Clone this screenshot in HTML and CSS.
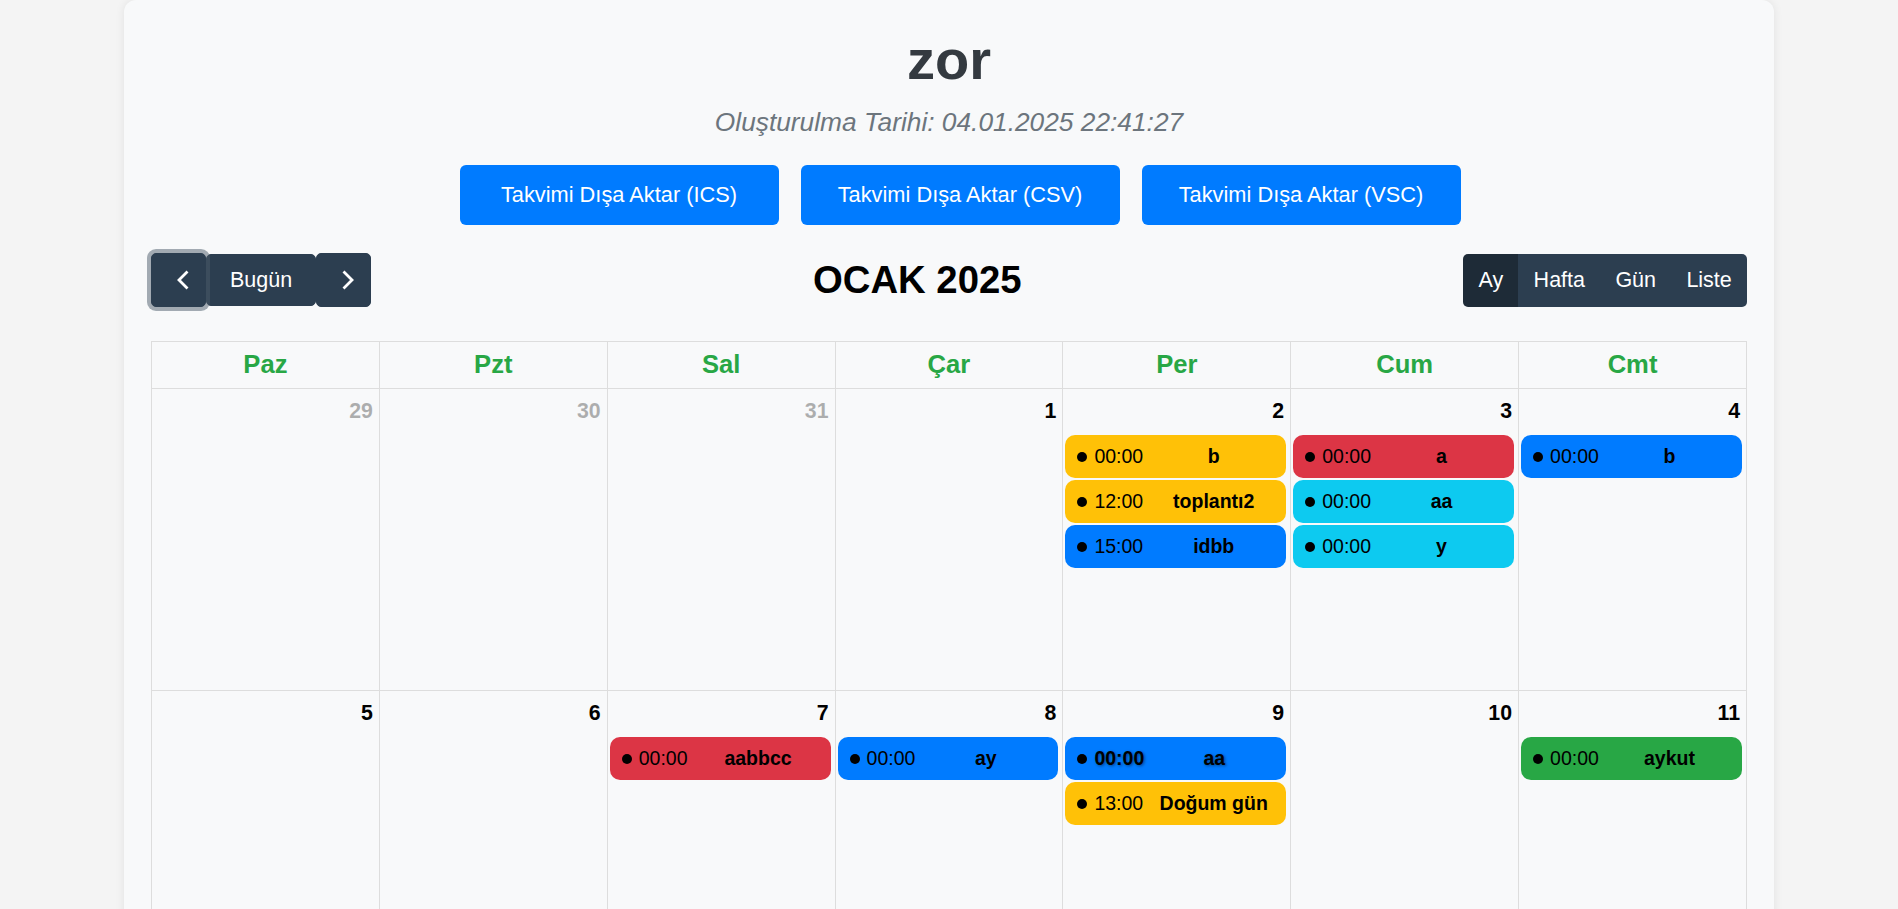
FILE: index.html
```html
<!DOCTYPE html>
<html lang="tr">
<head>
<meta charset="utf-8">
<title>zor</title>
<link rel="stylesheet" href="styles.css">
</head>
<body>
<div class="card">
  <h1 class="title">zor</h1>
  <p class="created">Oluşturulma Tarihi: 04.01.2025 22:41:27</p>
  <div class="exports">
    <button class="export-btn">Takvimi Dışa Aktar (ICS)</button>
    <button class="export-btn">Takvimi Dışa Aktar (CSV)</button>
    <button class="export-btn">Takvimi Dışa Aktar (VSC)</button>
  </div>

  <div class="toolbar">
    <div class="nav-group">
      <button class="nbtn arrow focus" aria-label="önceki">
        <svg width="12" height="20" viewBox="0 0 12 20"><polyline points="10.5,1.5 2,10 10.5,18.5" fill="none" stroke="#fff" stroke-width="2.8"/></svg>
      </button>
      <button class="nbtn today">Bugün</button>
      <button class="nbtn arrow" aria-label="sonraki">
        <svg width="12" height="20" viewBox="0 0 12 20"><polyline points="1.5,1.5 10,10 1.5,18.5" fill="none" stroke="#fff" stroke-width="2.8"/></svg>
      </button>
    </div>
    <h2 class="month">OCAK 2025</h2>
    <div class="view-group">
      <button class="vbtn active">Ay</button>
      <button class="vbtn">Hafta</button>
      <button class="vbtn">Gün</button>
      <button class="vbtn">Liste</button>
    </div>
  </div>

  <table class="cal">
    <thead>
      <tr>
        <th>Paz</th><th>Pzt</th><th>Sal</th><th>Çar</th><th>Per</th><th>Cum</th><th>Cmt</th>
      </tr>
    </thead>
    <tbody>
      <tr>
        <td class="day other"><div class="num">29</div></td>
        <td class="day other"><div class="num">30</div></td>
        <td class="day other"><div class="num">31</div></td>
        <td class="day"><div class="num">1</div></td>
        <td class="day"><div class="num">2</div>
          <div class="events">
            <div class="ev yellow"><span class="dot"></span><span class="time">00:00</span><span class="ev-title">b</span></div>
            <div class="ev yellow"><span class="dot"></span><span class="time">12:00</span><span class="ev-title">toplantı2</span></div>
            <div class="ev blue"><span class="dot"></span><span class="time">15:00</span><span class="ev-title">idbb</span></div>
          </div>
        </td>
        <td class="day"><div class="num">3</div>
          <div class="events">
            <div class="ev red"><span class="dot"></span><span class="time">00:00</span><span class="ev-title">a</span></div>
            <div class="ev cyan"><span class="dot"></span><span class="time">00:00</span><span class="ev-title">aa</span></div>
            <div class="ev cyan"><span class="dot"></span><span class="time">00:00</span><span class="ev-title">y</span></div>
          </div>
        </td>
        <td class="day"><div class="num">4</div>
          <div class="events">
            <div class="ev blue"><span class="dot"></span><span class="time">00:00</span><span class="ev-title">b</span></div>
          </div>
        </td>
      </tr>
      <tr>
        <td class="day"><div class="num">5</div></td>
        <td class="day"><div class="num">6</div></td>
        <td class="day"><div class="num">7</div>
          <div class="events">
            <div class="ev red"><span class="dot"></span><span class="time">00:00</span><span class="ev-title">aabbcc</span></div>
          </div>
        </td>
        <td class="day"><div class="num">8</div>
          <div class="events">
            <div class="ev blue"><span class="dot"></span><span class="time">00:00</span><span class="ev-title">ay</span></div>
          </div>
        </td>
        <td class="day"><div class="num">9</div>
          <div class="events">
            <div class="ev blue hover"><span class="dot"></span><span class="time">00:00</span><span class="ev-title">aa</span></div>
            <div class="ev yellow"><span class="dot"></span><span class="time">13:00</span><span class="ev-title">Doğum gün</span></div>
          </div>
        </td>
        <td class="day"><div class="num">10</div></td>
        <td class="day"><div class="num">11</div>
          <div class="events">
            <div class="ev green"><span class="dot"></span><span class="time">00:00</span><span class="ev-title">aykut</span></div>
          </div>
        </td>
      </tr>
    </tbody>
  </table>
</div>
</body>
</html>
```

FILE: styles.css
```css
html, body {
  margin: 0;
  padding: 0;
}

body {
  background: #f4f4f4;
  font-family: "Liberation Sans", Arial, sans-serif;
  color: #000;
}

.card {
  box-sizing: border-box;
  width: 1650px;
  margin: 0 auto;
  padding: 28px 27px 40px;
  background: #f8f9fa;
  border-radius: 12px;
  box-shadow: 0 0 10px rgba(0, 0, 0, 0.08);
}

.title {
  margin: 0;
  font-size: 56px;
  line-height: 64px;
  font-weight: bold;
  color: #343a40;
  text-align: center;
}

.created {
  margin: 15px 0 0;
  font-size: 26.3px;
  line-height: 30px;
  font-style: italic;
  color: #6c757d;
  text-align: center;
}

.exports {
  display: flex;
  justify-content: center;
  gap: 22px;
  padding-left: 22px;
  margin-top: 28px;
}

.export-btn {
  width: 319px;
  height: 60px;
  border: none;
  border-radius: 6px;
  background: #007bff;
  color: #fff;
  font-family: inherit;
  font-size: 21.8px;
  padding: 0;
}

.toolbar {
  display: flex;
  justify-content: space-between;
  align-items: center;
  margin-top: 28px;
  margin-bottom: 34px;
  height: 54px;
}

.nav-group {
  display: flex;
  align-items: center;
}

.nbtn {
  box-sizing: border-box;
  height: 54px;
  border: 1px solid #2c3e50;
  background: #2c3e50;
  color: #fff;
  border-radius: 5px;
  font-family: inherit;
  font-size: 21.5px;
  padding: 0;
  display: flex;
  align-items: center;
  justify-content: center;
}

.nbtn.arrow {
  width: 55px;
  padding-left: 9px;
}

.nbtn.focus {
  box-shadow: 0 0 0 4px rgba(76, 91, 106, 0.5);
  position: relative;
}

.nbtn.today {
  height: 52px;
  padding: 0 23px;
}

.month {
  margin: 0;
  font-size: 38.3px;
  font-weight: bold;
  color: #000;
}

.view-group {
  display: flex;
  height: 53px;
  border-radius: 5px;
  overflow: hidden;
}

.vbtn {
  border: none;
  background: #2c3e50;
  color: #fff;
  font-family: inherit;
  font-size: 21.5px;
  padding: 0 15.2px;
}

.vbtn.active {
  background: #1e2b37;
}

.cal {
  width: 100%;
  border-collapse: collapse;
  table-layout: fixed;
}

.cal th {
  border: 1px solid #ddd;
  padding: 8px 0 9px;
  font-size: 25.6px;
  line-height: 29px;
  font-weight: bold;
  color: #28a745;
  text-align: center;
}

.cal td {
  border: 1px solid #ddd;
  height: 301px;
  padding: 0;
  vertical-align: top;
}

.num {
  padding: 6px 6px 0;
  text-align: right;
  font-size: 21.3px;
  line-height: 32px;
  font-weight: bold;
  color: #000;
}

.day.other .num {
  opacity: 0.3;
}

.events {
  margin-top: 8px;
}

.ev {
  display: flex;
  align-items: center;
  height: 43px;
  margin: 0 4px 2px 2px;
  padding: 0 5px 0 12px;
  border-radius: 10px;
  font-size: 19.5px;
  color: #000;
  white-space: nowrap;
  overflow: hidden;
}

.dot {
  flex: none;
  width: 10px;
  height: 10px;
  border-radius: 50%;
  background: #000;
  margin-right: 7px;
}

.time {
  flex: none;
}

.ev-title {
  flex: 1;
  min-width: 0;
  margin-left: 3px;
  text-align: center;
  font-weight: bold;
  overflow: hidden;
}

.ev.hover .time {
  font-weight: bold;
}

.ev.hover .time,
.ev.hover .ev-title {
  text-shadow: 1px 1px 3px rgba(0, 0, 0, 0.45);
}

.yellow { background: #ffc107; }
.blue { background: #007bff; }
.red { background: #dc3545; }
.cyan { background: #0dcaf0; }
.green { background: #28a745; }
```
